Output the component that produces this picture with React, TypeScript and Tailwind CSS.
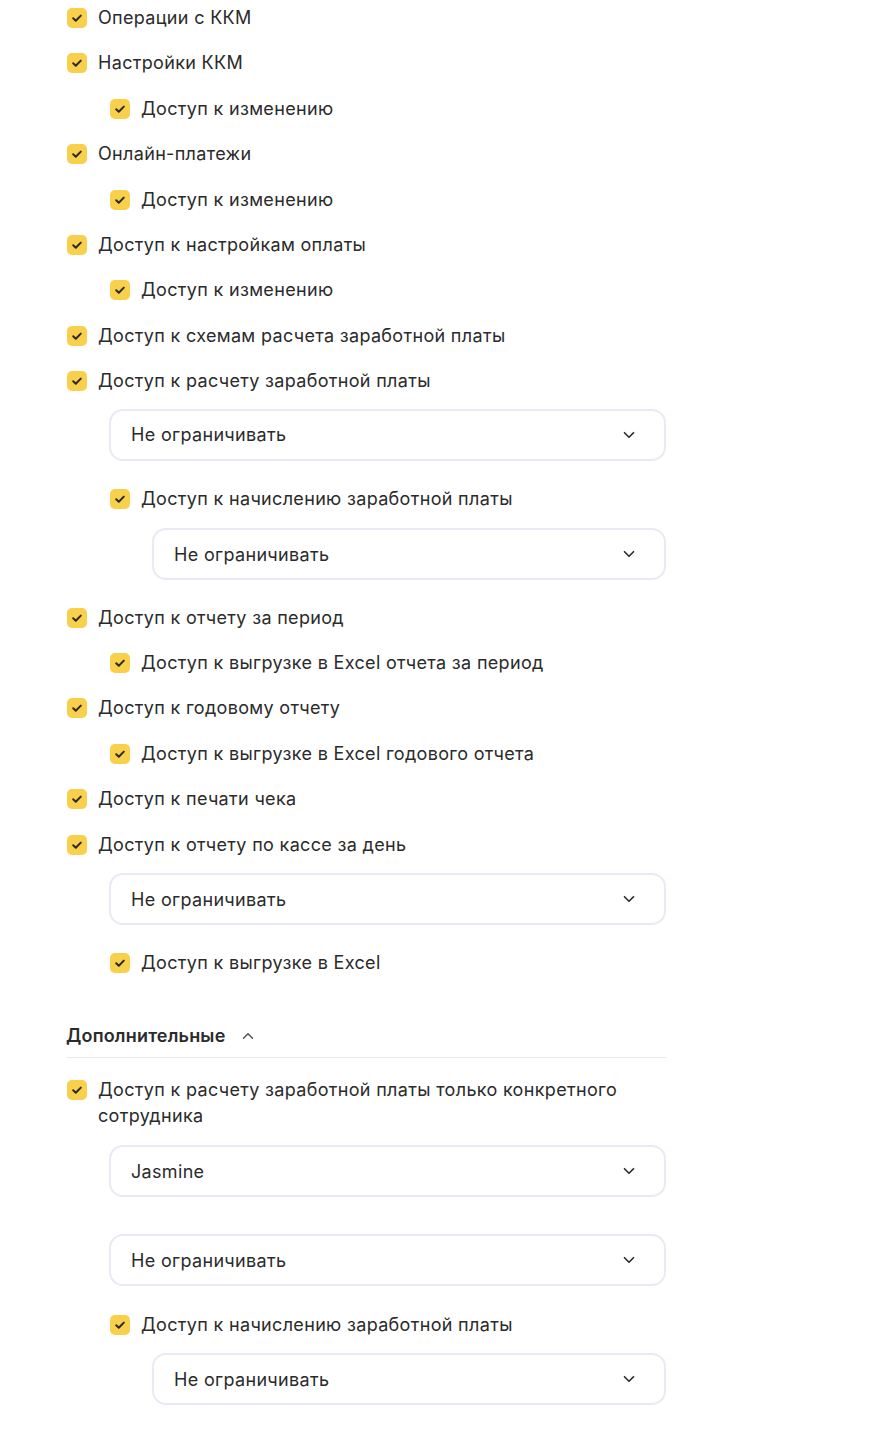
import { ChevronDown, ChevronUp } from "lucide-react";

type Node =
  | { kind: "check"; label: string; level: number }
  | { kind: "select"; value: string; level: number; spacing?: string };

const main: Node[] = [
  { kind: "check", label: "Операции с ККМ", level: 0 },
  { kind: "check", label: "Настройки ККМ", level: 0 },
  { kind: "check", label: "Доступ к изменению", level: 1 },
  { kind: "check", label: "Онлайн-платежи", level: 0 },
  { kind: "check", label: "Доступ к изменению", level: 1 },
  { kind: "check", label: "Доступ к настройкам оплаты", level: 0 },
  { kind: "check", label: "Доступ к изменению", level: 1 },
  { kind: "check", label: "Доступ к схемам расчета заработной платы", level: 0 },
  { kind: "check", label: "Доступ к расчету заработной платы", level: 0 },
  { kind: "select", value: "Не ограничивать", level: 1 },
  { kind: "check", label: "Доступ к начислению заработной платы", level: 1 },
  { kind: "select", value: "Не ограничивать", level: 2, spacing: "-mt-[3px] mb-[5px]" },
  { kind: "check", label: "Доступ к отчету за период", level: 0 },
  { kind: "check", label: "Доступ к выгрузке в Excel отчета за период", level: 1 },
  { kind: "check", label: "Доступ к годовому отчету", level: 0 },
  { kind: "check", label: "Доступ к выгрузке в Excel годового отчета", level: 1 },
  { kind: "check", label: "Доступ к печати чека", level: 0 },
  { kind: "check", label: "Доступ к отчету по кассе за день", level: 0 },
  { kind: "select", value: "Не ограничивать", level: 1, spacing: "-mt-[4px] mb-[6px]" },
  { kind: "check", label: "Доступ к выгрузке в Excel", level: 1 },
];

function Checkbox() {
  return (
    <span className="mt-[3px] flex h-[20px] w-[20px] shrink-0 items-center justify-center rounded-[5px] bg-[#f9d04b]">
      <svg width="14" height="14" viewBox="0 0 14 14" fill="none">
        <path d="M3.2 7.3l2.6 2.5 5-5.2" stroke="#2a2a2a" strokeWidth="2" strokeLinecap="round" strokeLinejoin="round" />
      </svg>
    </span>
  );
}

function CheckRow({ label, level }: { label: string; level: number }) {
  const indent = level === 0 ? "pl-[1px]" : level === 1 ? "pl-[44px]" : "pl-[87px]";
  return (
    <div className={`flex items-start gap-[11px] ${indent}`}>
      <Checkbox />
      <span className="text-[18px] leading-[26px] tracking-[0.018em] text-[#2b2b2b]">{label}</span>
    </div>
  );
}

function Select({ value, level, spacing = "-mt-[5px] mb-[6px]" }: { value: string; level: number; spacing?: string }) {
  const indent = level === 1 ? "pl-[43px]" : "pl-[86px]";
  return (
    <div className={`${indent} ${spacing}`}>
      <div className="flex h-[52px] items-center justify-between rounded-[14px] border-2 border-[#e9eaf6] bg-white pl-[20px] pr-[26px]">
        <span className="text-[18px] tracking-[0.018em] text-[#2b2b2b]">{value}</span>
        <ChevronDown size={18} strokeWidth={2.2} className="text-[#2b2b2b]" />
      </div>
    </div>
  );
}

function renderNode(n: Node, i: number) {
  return n.kind === "check" ? (
    <CheckRow key={i} label={n.label} level={n.level} />
  ) : (
    <Select key={i} value={n.value} level={n.level} spacing={n.spacing} />
  );
}

export default function App() {
  return (
    <div className="min-h-screen bg-white pt-[5px]" style={{ fontFamily: "Inter, 'Noto Sans', sans-serif" }}>
      <div className="ml-[66px] w-[600px]">
        <div className="flex flex-col gap-[19.4px]">{main.map(renderNode)}</div>

        <div className="mt-[47px] flex items-center gap-[14px] border-b border-[#e8e9f3] pb-[8px]">
          <span className="text-[18px] font-semibold leading-[26px] tracking-[0.01em] text-[#2b2b2b]">Дополнительные</span>
          <ChevronUp size={18} strokeWidth={2} className="text-[#555]" />
        </div>

        <div className="mt-[19px] flex flex-col gap-[19px]">
          <CheckRow label="Доступ к расчету заработной платы только конкретного сотрудника" level={0} />
          <Select value="Jasmine" level={1} spacing="-mt-[3px] mb-[6px]" />
          <div className="mt-[12px]">
            <Select value="Не ограничивать" level={1} spacing="mb-[7px]" />
          </div>
          <CheckRow label="Доступ к начислению заработной платы" level={1} />
          <Select value="Не ограничивать" level={2} spacing="-mt-[4px]" />
        </div>
      </div>
    </div>
  );
}
